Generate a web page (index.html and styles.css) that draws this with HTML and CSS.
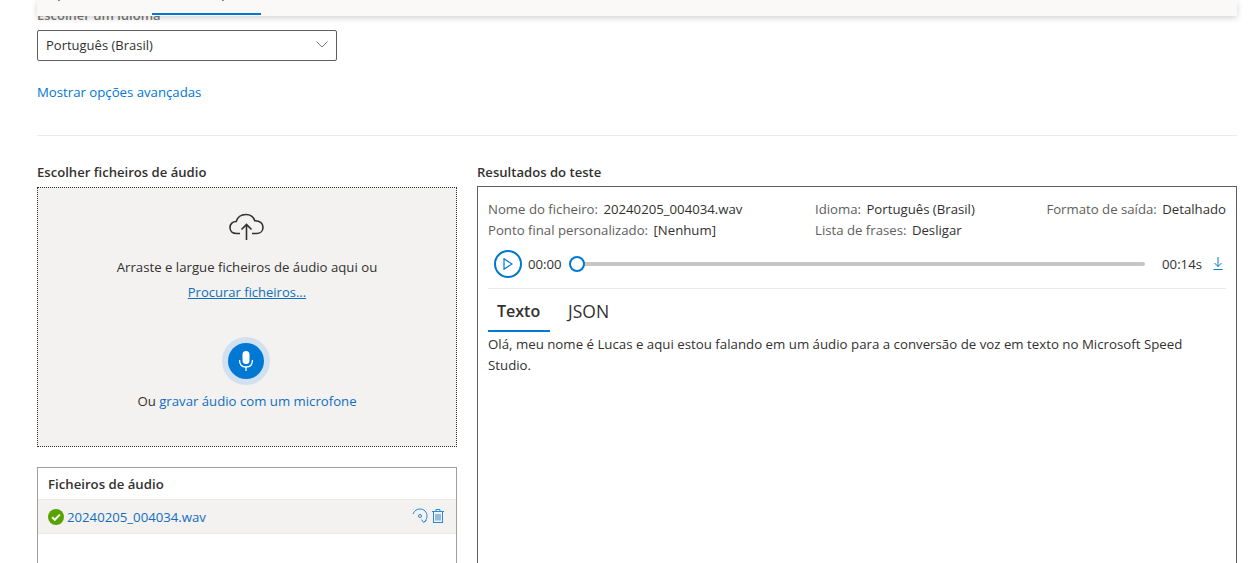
FILE: index.html
```html
<!DOCTYPE html>
<html lang="pt">
<head>
    <meta charset="UTF-8">
    <title>Speech Studio</title>
    <link rel="stylesheet" href="styles.css">
</head>
<body>
    <div class="page">
        <div class="tab-panel">
            <span class="top-tab">Experimente</span>
            <span class="top-tab active">Como implementar</span>
        </div>

        <label class="field-label">Escolher um idioma</label>
        <div class="select">
            <span>Português (Brasil)</span>
            <svg width="12" height="7" viewBox="0 0 12 7"><path d="M0.5 0.5 L6 6 L11.5 0.5" fill="none" stroke="#797775" stroke-width="1"/></svg>
        </div>
        <a class="link advanced">Mostrar opções avançadas</a>
        <hr class="divider">

        <div class="columns">
            <div class="left-col">
                <h2 class="section-title">Escolher ficheiros de áudio</h2>
                <div class="dropzone">
                    <svg class="cloud" width="38" height="30" viewBox="0 0 38 30">
                        <path d="M12 21.5 H8.5 C4.5 21.5 2 19 2 15.5 C2 12 4.7 9.5 8.2 9.5 C9.5 5.2 13.4 2.5 18 2.5 C22.3 2.5 25.6 5.2 26.8 8.8 C31.6 8.6 35 11.3 35 15.2 C35 19 32.3 21.5 28.5 21.5 H24" fill="none" stroke="#323130" stroke-width="1.6"/>
                        <path d="M18.5 28 V12.5 M13.5 17.5 L18.5 12.5 L23.5 17.5" fill="none" stroke="#323130" stroke-width="1.6"/>
                    </svg>
                    <p class="drop-text">Arraste e largue ficheiros de áudio aqui ou</p>
                    <a class="link browse">Procurar ficheiros...</a>
                    <div class="mic-ring">
                        <div class="mic">
                            <svg width="16" height="22" viewBox="0 0 16 22">
                                <rect x="4.5" y="1" width="7" height="13" rx="3.5" fill="#fff"/>
                                <path d="M1.5 10 C1.5 14.5 4 17 8 17 C12 17 14.5 14.5 14.5 10" fill="none" stroke="#fff" stroke-width="1.3"/>
                                <path d="M8 17 V21" stroke="#fff" stroke-width="1.3"/>
                            </svg>
                        </div>
                    </div>
                    <p class="record-text">Ou <a class="link">gravar áudio com um microfone</a></p>
                </div>

                <div class="files-box">
                    <div class="files-title">Ficheiros de áudio</div>
                    <div class="file-row">
                        <svg width="16" height="16" viewBox="0 0 16 16">
                            <circle cx="8" cy="8" r="8" fill="#57a300"/>
                            <path d="M4.2 8.3 L6.8 10.8 L11.8 5.6" fill="none" stroke="#fff" stroke-width="2"/>
                        </svg>
                        <a class="link file-name">20240205_004034.wav</a>
                        <span class="file-actions">
                            <svg width="16" height="16" viewBox="0 0 16 16">
                                <path d="M1 6 C2.5 2.5 5 1 8 1 C12 1 15 4 15 8 C15 10.5 14 12.5 12 14" fill="none" stroke="#2b88d8" stroke-width="1"/>
                                <path d="M9.5 11.5 L11.5 14.5 L14.5 12.5" fill="none" stroke="#2b88d8" stroke-width="1"/>
                                <circle cx="8" cy="8" r="1.5" fill="none" stroke="#2b88d8" stroke-width="1"/>
                            </svg>
                            <svg width="12" height="14" viewBox="0 0 12 14">
                                <path d="M0 2.5 H12 M4 2.5 V0.5 H8 V2.5" fill="none" stroke="#2b88d8" stroke-width="1"/>
                                <rect x="1.5" y="2.5" width="9" height="11" fill="none" stroke="#2b88d8" stroke-width="1"/>
                                <path d="M4 5 V11.5 M6 5 V11.5 M8 5 V11.5" stroke="#2b88d8" stroke-width="1"/>
                            </svg>
                        </span>
                    </div>
                </div>
            </div>

            <div class="right-col">
                <h2 class="section-title results-title">Resultados do teste</h2>
                <div class="results">
                    <div class="meta">
                        <div><span class="key">Nome do ficheiro:</span> 20240205_004034.wav</div>
                        <div><span class="key">Idioma:</span> Português (Brasil)</div>
                        <div class="meta-end"><span class="key">Formato de saída:</span> Detalhado</div>
                        <div><span class="key">Ponto final personalizado:</span> [Nenhum]</div>
                        <div><span class="key">Lista de frases:</span> Desligar</div>
                    </div>

                    <div class="player">
                        <div class="play">
                            <svg width="10" height="12" viewBox="0 0 10 12"><path d="M1 0.8 L9 6 L1 11.2 Z" fill="none" stroke="#0078d4" stroke-width="1.2"/></svg>
                        </div>
                        <span class="time">00:00</span>
                        <div class="track"><div class="thumb"></div></div>
                        <span class="time total">00:14s</span>
                        <svg width="10" height="13" viewBox="0 0 10 13">
                            <path d="M5 0 V9.5 M1.5 6 L5 9.5 L8.5 6 M0.5 12.5 H9.5" fill="none" stroke="#0078d4" stroke-width="1"/>
                        </svg>
                    </div>

                    <div class="tabs">
                        <span class="tab selected">Texto</span>
                        <span class="tab json">JSON</span>
                    </div>
                    <p class="transcript">Olá, meu nome é Lucas e aqui estou falando em um áudio para a conversão de voz em texto no Microsoft Speed Studio.</p>
                </div>
            </div>
        </div>
    </div>
</body>
</html>
```

FILE: styles.css
```css
html, body {
    height: 563px;
    overflow: hidden;
}

body {
    margin: 0;
    background-color: #fff;
    color: #323130;
    font-family: "Open Sans", "Noto Sans", sans-serif;
    font-size: 13.2px;
}

.page {
    width: 1200px;
    margin-left: 37px;
}

.link {
    color: #106ebe;
}

.tab-panel {
    position: relative;
    z-index: 2;
    display: flex;
    align-items: flex-start;
    height: 16px;
    overflow: hidden;
    background-color: #faf9f8;
    box-shadow: 0 2px 6px rgba(0, 0, 0, 0.18);
}

.top-tab {
    flex: none;
    box-sizing: border-box;
    width: 115px;
    height: 27px;
    margin-top: -12px;
    padding-left: 6px;
    line-height: 10px;
    white-space: nowrap;
}

.top-tab.active {
    width: 109px;
    padding-left: 14px;
    border-bottom: 2px solid #0078d4;
}

.field-label {
    display: block;
    height: 14px;
    margin-top: -8px;
    line-height: 14px;
    color: #7a7876;
    font-size: 13px;
    font-weight: 600;
}

.select {
    display: flex;
    align-items: center;
    justify-content: space-between;
    box-sizing: border-box;
    width: 300px;
    height: 31px;
    margin-top: 8px;
    padding: 0 8px 2px;
    border: 1px solid #605e5c;
    border-radius: 2px;
    font-size: 13px;
}

.advanced {
    display: block;
    margin-top: 22px;
    line-height: 18px;
    color: #0078d4;
}

.divider {
    height: 1px;
    margin: 34px 0 0;
    border: 0;
    background-color: #edebe9;
}

.columns {
    display: grid;
    grid-template-columns: 420px 760px;
    gap: 20px;
    margin-top: 27px;
}

.section-title {
    margin: 0;
    height: 24px;
    font-size: 13.1px;
    font-weight: 600;
    line-height: 18px;
}

.results-title {
    height: 23px;
}

.dropzone {
    display: flex;
    flex-direction: column;
    align-items: center;
    box-sizing: border-box;
    height: 260px;
    padding-top: 24px;
    border: 1px dotted #323130;
    background-color: #f3f2f1;
}

.drop-text {
    margin: 16px 0 0;
    line-height: 18px;
}

.browse {
    margin-top: 7px;
    font-size: 13px;
    line-height: 18px;
    text-decoration: underline;
}

.mic-ring {
    display: flex;
    align-items: center;
    justify-content: center;
    width: 48px;
    height: 48px;
    margin: 36px 2px 0 0;
    border-radius: 50%;
    background-color: #d1e1ef;
}

.mic {
    display: flex;
    align-items: center;
    justify-content: center;
    width: 36px;
    height: 36px;
    border-radius: 50%;
    background-color: #0078d4;
}

.record-text {
    margin: 7px 0 0;
    line-height: 18px;
}

.files-box {
    box-sizing: border-box;
    height: 120px;
    margin-top: 20px;
    border: 1px solid #a19f9d;
}

.files-title {
    height: 31px;
    padding-left: 10px;
    font-weight: 600;
    line-height: 33px;
}

.file-row {
    display: flex;
    align-items: center;
    gap: 3px;
    box-sizing: border-box;
    height: 35px;
    padding: 0 12px 0 10px;
    border-top: 1px solid #edebe9;
    border-bottom: 1px solid #edebe9;
    background-color: #f3f2f1;
}

.file-actions {
    display: flex;
    align-items: center;
    gap: 4px;
    margin: -2px 0 0 auto;
}

.results {
    box-sizing: border-box;
    height: 400px;
    padding: 13px 10px;
    border: 1px solid #605e5c;
}

.meta {
    display: grid;
    grid-template-columns: 327px 1fr auto;
    row-gap: 3px;
    line-height: 18px;
}

.key {
    color: #605e5c;
    margin-right: 2px;
}

.player {
    display: flex;
    align-items: center;
    height: 37px;
    margin-top: 6px;
    padding: 0 3px 6px 6px;
    border-bottom: 1px solid #edebe9;
}

.play {
    display: flex;
    align-items: center;
    justify-content: center;
    box-sizing: border-box;
    width: 28px;
    height: 28px;
    border: 2px solid #0078d4;
    border-radius: 50%;
}

.time {
    margin-left: 6px;
}

.track {
    flex: 1;
    display: flex;
    align-items: center;
    height: 4px;
    margin: 0 17px 0 7px;
    border-radius: 2px;
    background-color: #c8c6c4;
}

.thumb {
    box-sizing: border-box;
    width: 16px;
    height: 16px;
    border: 2px solid #0078d4;
    border-radius: 50%;
    background-color: #fff;
}

.total {
    margin: 0 11px 0 0;
}

.tabs {
    display: flex;
    height: 42px;
}

.tab {
    box-sizing: border-box;
    height: 43px;
    padding: 0 9px;
    margin-right: 9px;
    font-size: 16px;
    line-height: 44px;
}

.tab.selected {
    width: 62px;
    border-bottom: 2px solid #0078d4;
    font-weight: 600;
}

.tab.json {
    font-size: 17.5px;
}

.transcript {
    margin: 3px 0 0;
    font-size: 13.27px;
    line-height: 21px;
}
```
